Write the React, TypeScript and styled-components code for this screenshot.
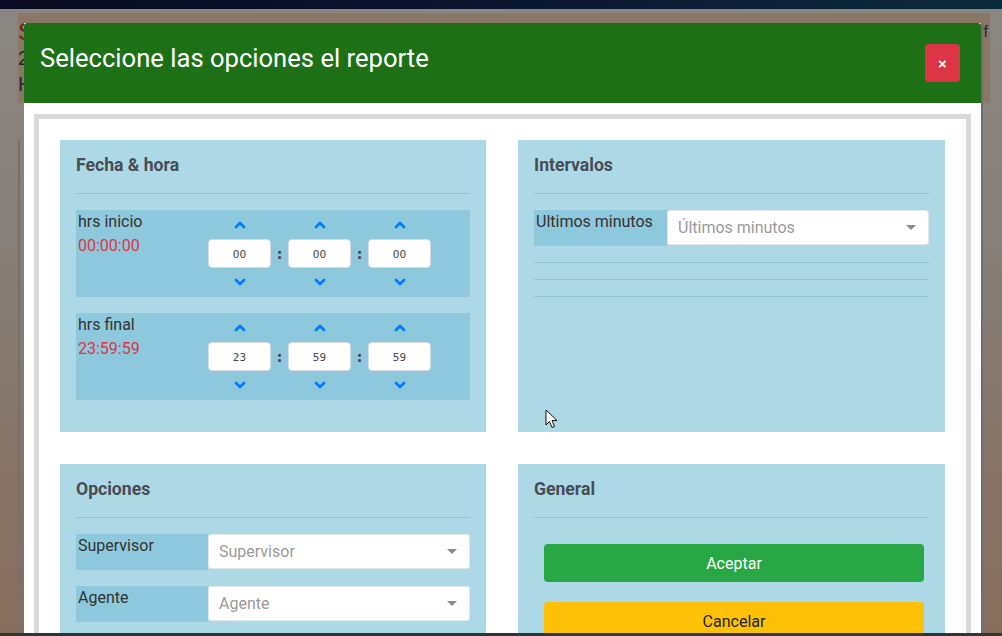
import React from "react";
import styled, { createGlobalStyle } from "styled-components";

const Global = createGlobalStyle`
  html, body { margin: 0; padding: 0; overflow: hidden; }
  body { font-family: Roboto, "Noto Sans", Arial, sans-serif; }
  * { box-sizing: border-box; }
`;

const Screen = styled.div`
  position: relative;
  width: 1002px;
  height: 636px;
  overflow: hidden;
  display: flex;
  flex-direction: column;
  background: linear-gradient(180deg, #8a8784 0%, #867d76 45%, #866c5a 100%);
`;

const TopBar = styled.div`
  height: 9px;
  flex: none;
  background: linear-gradient(90deg, #0a0a22 0%, #0b1733 55%, #0a2c3c 100%);
`;

const BackPage = styled.div`
  flex: 1;
  padding: 4px 12px 0 18px;
  display: flex;
  flex-direction: column;
`;

const BackHeader = styled.div`
  height: 90px;
  background: #8a7766;
  display: flex;
  justify-content: space-between;
  padding: 6px 2px 0 0;
  font-family: "Liberation Sans", Arial, sans-serif;
`;

const BackLetters = styled.div`
  display: flex;
  flex-direction: column;
  font-size: 20px;
  line-height: 26px;
  color: #2a2430;
  & > span:first-child { color: #7a1a1a; font-size: 24px; }
`;

const BackBody = styled.div`
  flex: 1;
  margin-top: 37px;
  border-left: 2px solid #75716e;
  border-right: 2px solid #6f6c6b;
  margin-right: 7px;
`;

const Modal = styled.div`
  position: absolute;
  left: 24px;
  top: 23px;
  width: 957px;
  height: 640px;
  background: #fff;
  display: flex;
  flex-direction: column;
  box-shadow: 2px 0 0 #6f6f70;
`;

const ModalHeader = styled.div`
  height: 80px;
  flex: none;
  background: #1e7017;
  border-radius: 3px 3px 0 0;
  display: flex;
  justify-content: space-between;
  align-items: flex-start;
  padding: 21px 21px 0 16px;
`;

const ModalTitle = styled.h4`
  margin: 0;
  color: #fff;
  font-size: 25.6px;
  font-weight: 400;
  line-height: 28px;
`;

const CloseButton = styled.button`
  width: 35px;
  height: 38px;
  border: none;
  border-radius: 4px;
  background: #dc3545;
  color: #fff;
  font-size: 15px;
  font-weight: 700;
  font-family: "Liberation Sans", Arial, sans-serif;
  padding: 0;
  display: flex;
  align-items: center;
  justify-content: center;
`;

const ModalBody = styled.div`
  flex: 1;
  padding: 11px 10px 0 10px;
`;

const Frame = styled.div`
  border: 5px solid #d9d9d9;
  border-bottom: none;
  padding: 21px 21px 0 21px;
  display: grid;
  grid-template-columns: 426px 427px;
  column-gap: 32px;
  row-gap: 32px;
  grid-template-rows: 292px 200px;
`;

const Panel = styled.section`
  background: #add8e6;
  padding: 0 16px;
  display: flex;
  flex-direction: column;
`;

const PanelTitle = styled.h5`
  margin: 15px 0 0 0;
  font-size: 17.6px;
  line-height: 20px;
  font-weight: 700;
  color: #474d55;
`;

const Rule = styled.hr`
  margin: 18px 0 16px 0;
  border: none;
  border-top: 1px solid #93c3d3;
  height: 0;
`;

const TimeRow = styled.div`
  display: flex;
  background: #8ec8dc;
  height: 87px;
  margin-bottom: 16px;
`;

const TimeLabel = styled.div`
  width: 132px;
  padding: 0 0 0 2px;
  font-size: 16px;
  line-height: 24px;
  color: #333;
`;

const TimeValue = styled.div`
  color: #dc3545;
`;

const Spinners = styled.div`
  display: flex;
  align-items: center;
`;

const SpinCol = styled.div`
  display: flex;
  flex-direction: column;
  align-items: center;
  width: 63px;
  gap: 8px;
`;

const Chevron = styled.svg`
  width: 12px;
  height: 12px;
  display: block;
`;

const TimeInput = styled.div`
  width: 63px;
  height: 29px;
  background: #fff;
  border: 1px solid #d6dde2;
  border-radius: 4px;
  color: #444;
  display: flex;
  align-items: center;
  justify-content: center;
  font-family: "DejaVu Sans", Roboto, sans-serif;
  font-size: 10.5px;
`;

const Colon = styled.span`
  width: 17px;
  text-align: center;
  font-size: 14px;
  font-weight: 700;
  color: #444;
  font-family: "DejaVu Sans", sans-serif;
`;

const FieldRow = styled.div`
  display: flex;
  height: 36px;
  margin-bottom: 16px;
`;

const FieldLabel = styled.div<{ $w: number }>`
  width: ${(p) => p.$w}px;
  flex: none;
  background: #8ec8dc;
  padding: 0 0 0 2px;
  font-size: 16px;
  line-height: 23px;
  color: #333;
`;

const Select = styled.div`
  flex: 1;
  height: 35px;
  background: #fff;
  border: 1px solid #e3e6e9;
  border-radius: 3px;
  display: flex;
  align-items: center;
  justify-content: space-between;
  padding: 0 12px 0 10px;
  font-size: 16px;
  color: #9a9a9a;
`;

const Caret = styled.span`
  width: 0;
  height: 0;
  border-left: 5px solid transparent;
  border-right: 5px solid transparent;
  border-top: 5px solid #8a8a8a;
`;

const EmptyGroup = styled.div`
  height: 17px;
  border-top: 1px solid #93c3d3;
`;

const ActionButton = styled.button<{ $bg: string; $fg: string }>`
  display: block;
  height: 38px;
  margin: 10px 5px 10px 10px;
  border: none;
  border-radius: 4px;
  background: ${(p) => p.$bg};
  color: ${(p) => p.$fg};
  font-family: Roboto, sans-serif;
  font-size: 16px;
  flex: none;
`;

const Cursor = styled.svg`
  position: absolute;
  left: 545px;
  top: 409px;
  width: 14px;
  height: 21px;
`;

const TaskStrip = styled.div`
  position: absolute;
  left: 0;
  right: 0;
  bottom: 0;
  height: 3px;
  background: #333533;
`;

const Up = () => (
  <Chevron viewBox="0 0 12 12">
    <path d="M2 8 L6 4 L10 8" fill="none" stroke="#007bff" strokeWidth="2.8" strokeLinecap="round" strokeLinejoin="round" />
  </Chevron>
);
const Down = () => (
  <Chevron viewBox="0 0 12 12">
    <path d="M2 4 L6 8 L10 4" fill="none" stroke="#007bff" strokeWidth="2.8" strokeLinecap="round" strokeLinejoin="round" />
  </Chevron>
);

const TimeBlock: React.FC<{ label: string; value: string; parts: string[] }> = ({ label, value, parts }) => (
  <TimeRow>
    <TimeLabel>
      {label}
      <TimeValue>{value}</TimeValue>
    </TimeLabel>
    <Spinners>
      {parts.map((p, i) => (
        <React.Fragment key={i}>
          {i > 0 && <Colon>:</Colon>}
          <SpinCol>
            <Up />
            <TimeInput>{p}</TimeInput>
            <Down />
          </SpinCol>
        </React.Fragment>
      ))}
    </Spinners>
  </TimeRow>
);

export default function App() {
  return (
    <Screen>
      <Global />
      <TopBar />
      <BackPage>
        <BackHeader>
          <BackLetters>
            <span>S</span>
            <span>2</span>
            <span>H</span>
          </BackLetters>
          <BackLetters>
            <span style={{ color: "#2a2430", fontSize: 16 }}>rf</span>
          </BackLetters>
        </BackHeader>
        <BackBody />
      </BackPage>

      <Modal>
        <ModalHeader>
          <ModalTitle>Seleccione las opciones el reporte</ModalTitle>
          <CloseButton>×</CloseButton>
        </ModalHeader>
        <ModalBody>
          <Frame>
            <Panel>
              <PanelTitle>Fecha &amp; hora</PanelTitle>
              <Rule />
              <TimeBlock label="hrs inicio" value="00:00:00" parts={["00", "00", "00"]} />
              <TimeBlock label="hrs final" value="23:59:59" parts={["23", "59", "59"]} />
            </Panel>
            <Panel>
              <PanelTitle>Intervalos</PanelTitle>
              <Rule />
              <FieldRow>
                <FieldLabel $w={133}>Ultimos minutos</FieldLabel>
                <Select>
                  Últimos minutos
                  <Caret />
                </Select>
              </FieldRow>
              <EmptyGroup />
              <EmptyGroup />
              <EmptyGroup />
            </Panel>
            <Panel>
              <PanelTitle>Opciones</PanelTitle>
              <Rule />
              <FieldRow>
                <FieldLabel $w={132}>Supervisor</FieldLabel>
                <Select>
                  Supervisor
                  <Caret />
                </Select>
              </FieldRow>
              <FieldRow>
                <FieldLabel $w={132}>Agente</FieldLabel>
                <Select>
                  Agente
                  <Caret />
                </Select>
              </FieldRow>
            </Panel>
            <Panel>
              <PanelTitle>General</PanelTitle>
              <Rule />
              <ActionButton $bg="#28a745" $fg="#fff">Aceptar</ActionButton>
              <ActionButton $bg="#ffc107" $fg="#212529">Cancelar</ActionButton>
            </Panel>
          </Frame>
        </ModalBody>
      </Modal>

      <Cursor viewBox="0 0 14 21">
        <path d="M1 1 L1 16 L4.5 12.5 L7 18.5 L9.5 17.5 L7 11.5 L12 11.5 Z" fill="#fff" stroke="#111" strokeWidth="1" strokeLinejoin="round" />
      </Cursor>
      <TaskStrip />
    </Screen>
  );
}
